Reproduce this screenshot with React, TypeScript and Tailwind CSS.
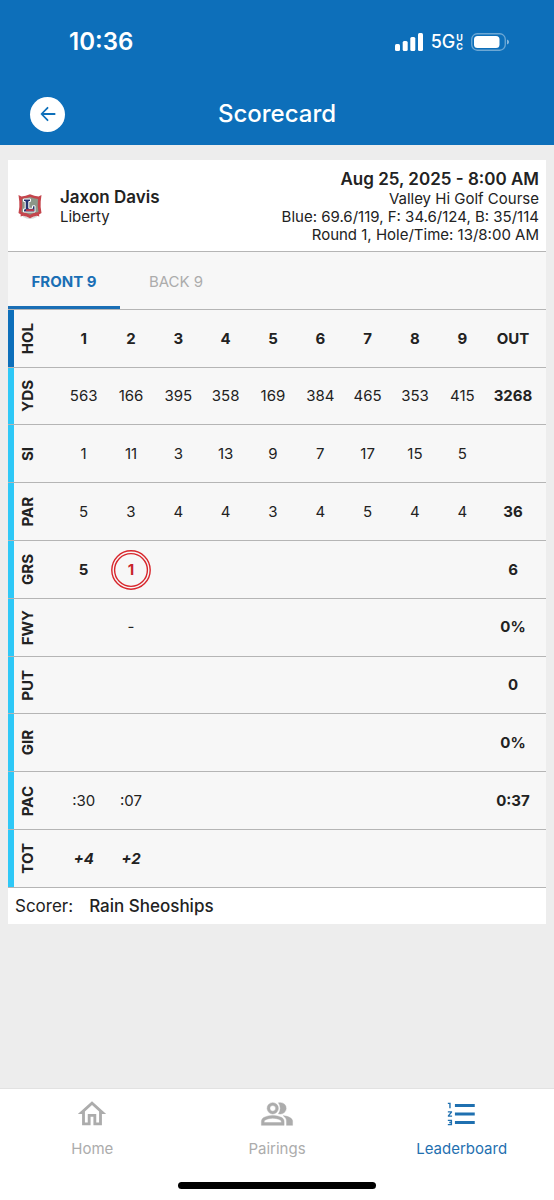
import React from "react";
import clsx from "clsx";
import { MdOutlineHome, MdFormatListNumbered } from "react-icons/md";

interface ScoreRow {
  label: string;
  values: string[];
  total: string;
  style?: string;
}

const holes = ["1", "2", "3", "4", "5", "6", "7", "8", "9"];

const rows: ScoreRow[] = [
  { label: "YDS", values: ["563", "166", "395", "358", "169", "384", "465", "353", "415"], total: "3268" },
  { label: "SI", values: ["1", "11", "3", "13", "9", "7", "17", "15", "5"], total: "" },
  { label: "PAR", values: ["5", "3", "4", "4", "3", "4", "5", "4", "4"], total: "36" },
  { label: "GRS", values: ["5", "1"], total: "6", style: "font-bold" },
  { label: "FWY", values: ["", "-"], total: "0%" },
  { label: "PUT", values: [], total: "0" },
  { label: "GIR", values: [], total: "0%" },
  { label: "PAC", values: [":30", ":07"], total: "0:37" },
  { label: "TOT", values: ["+4", "+2"], total: "", style: "font-bold italic" },
];

function PairingsIcon({ size }: { size: number }) {
  return (
    <svg width={size} height={size} viewBox="0 0 24 24" fill="currentColor" stroke="currentColor" strokeWidth="0.3" aria-hidden="true">
      <path
        fillRule="evenodd"
        d="M9 12a4 4 0 1 1 0-8 4 4 0 0 1 0 8zm0-2a2 2 0 1 0 0-4 2 2 0 0 0 0 4zM1 20v-2.800q0-.85.440-1.560T2.600 14.550q1.550-.78 3.150-1.160T9 13t3.250.390 3.150 1.160q.73.380 1.160 1.090T17 17.200V20zm2-2h12v-.8q0-.28-.14-.5t-.36-.35q-1.350-.68-2.730-1.010T9 15t-2.770.340T3.500 16.350q-.22.130-.36.350T3 17.200z"
      />
      <path d="M13 11.900Q14.300 10.250 14.300 8T13 4.100Q13.500 4 14.500 4a4 4 0 0 1 0 8q-.9 0-1.500-.1zM18.700 20v-3q0-1.100-.61-2.110T16.400 13.150q1.530.15 2.650.51t2.100.89q.9.500 1.380 1.110T23 17v3z" />
    </svg>
  );
}

const navItems = [
  { label: "Home", icon: MdOutlineHome, active: false },
  { label: "Pairings", icon: PairingsIcon, active: false },
  { label: "Leaderboard", icon: MdFormatListNumbered, active: true },
];

function StatusBar() {
  return (
    <div className="flex h-[83px] items-center justify-between pr-11 pl-[69px]">
      <span className="text-[24px] font-semibold">10:36</span>
      <div className="flex items-center gap-2">
        <svg width="28" height="18" viewBox="0 0 28 18" fill="currentColor" aria-hidden="true">
          <rect x="0" y="11" width="5" height="7" rx="1.5" />
          <rect x="7.7" y="8" width="5" height="10" rx="1.5" />
          <rect x="15.3" y="4" width="5" height="14" rx="1.5" />
          <rect x="23" y="0" width="5" height="18" rx="1.5" />
        </svg>
        <div className="flex items-center gap-px">
          <span className="text-[18px] font-medium">5G</span>
          <span className="flex flex-col text-[9px] leading-[9px] font-bold">
            <span>U</span>
            <span>C</span>
          </span>
        </div>
        <svg width="39" height="18" viewBox="0 0 39 18" aria-hidden="true">
          <rect x="0.75" y="0.75" width="33.5" height="16.5" rx="5.5" fill="none" stroke="#fff" strokeOpacity="0.4" strokeWidth="1.3" />
          <rect x="3" y="3" width="25.5" height="12" rx="3.5" fill="#fff" />
          <path d="M36 6.5c1.4.5 2 1.4 2 2.500s-.6 2-2 2.500z" fill="#fff" fillOpacity="0.5" />
        </svg>
      </div>
    </div>
  );
}

function SchoolLogo() {
  return (
    <svg width="24" height="26" viewBox="0 0 24 26" role="img" aria-label="Liberty">
      <path d="M4 20q8 7 16 0l-1 3q-7 4-14 0z" fill="#d9dad8" />
      <path d="M0.500 1l3 1.500q4-.3 8.500-2.200 4.500 1.900 8.500 2.200l3-1.500-.8 6.500q-.5 6 .8 11.500l-2.500 1.500.3 2-2.500-.8q-4 .5-6.800 2.500-2.800-2-6.800-2.500L2.500 22.500l.3-2L.5 19q1.300-5.500.8-11.500z" fill="#c4454c" />
      <path d="M4 5q4-.3 8-2 4 1.700 8 2-.8 7 .5 13-5 .5-8.500 2.700Q8.500 18.500 3.500 18 4.800 12 4 5z" fill="#8c9789" />
      <path d="M5.500 5h7v2.500h-1.700v6.800h3.700v-2.500H17V18H5.500v-3h1.700V7.500H5.500z" fill="#26346f" stroke="#fff" strokeWidth="1" />
      <path d="M8 15.200h8v2H8z" fill="#c23a48" />
    </svg>
  );
}

function PlayerHeader() {
  return (
    <section className="flex items-center justify-between border-b border-[#b5b5b5] bg-white px-[7px] pt-2 pb-[7px]">
      <div className="flex items-center gap-[18px] pt-px pl-[3px]">
        <SchoolLogo />
        <div>
          <h2 className="text-[17px] leading-5 font-semibold">Jaxon Davis</h2>
          <p className="text-[15px] leading-5">Liberty</p>
        </div>
      </div>
      <div className="text-right text-[15px] leading-[18px]">
        <p className="text-[17px] leading-[22px] font-semibold">Aug 25, 2025 - 8:00 AM</p>
        <p>Valley Hi Golf Course</p>
        <p>Blue: 69.6/119, F: 34.6/124, B: 35/114</p>
        <p>Round 1, Hole/Time: 13/8:00 AM</p>
      </div>
    </section>
  );
}

function RowLabel({ children }: { children: React.ReactNode }) {
  return (
    <th scope="row" className="p-0">
      <span className="ml-1 block w-5 rotate-180 text-center leading-5 font-bold [writing-mode:vertical-rl]">
        {children}
      </span>
    </th>
  );
}

// Double ring = eagle or better
function EagleScore({ score }: { score: string }) {
  return (
    <span className="relative mx-auto flex size-10 items-center justify-center text-[#c8232b]">
      <svg viewBox="0 0 40 40" className="absolute inset-0" fill="none" stroke="#d8262c" strokeWidth="1.4" aria-hidden="true">
        <circle cx="20" cy="20" r="19.2" />
        <circle cx="20" cy="20" r="16.4" />
      </svg>
      {score}
    </span>
  );
}

function ScoreTable() {
  return (
    <table className="h-[578px] w-full table-fixed border-collapse text-center text-[15px]">
      <colgroup>
        <col className="w-[6px]" />
        <col className="w-[46px]" />
        {holes.map((hole) => (
          <col key={hole} />
        ))}
        <col className="w-[60px]" />
      </colgroup>
      <thead>
        <tr className="h-[57px] border-b border-[#b5b5b5]">
          <td className="bg-[#0d6fba] p-0" />
          <RowLabel>HOL</RowLabel>
          {holes.map((hole) => (
            <th key={hole} scope="col" className="px-0 pt-px pb-0 font-bold">
              {hole}
            </th>
          ))}
          <th scope="col" className="pt-px pr-[6px] pb-0 pl-0 font-bold">OUT</th>
        </tr>
      </thead>
      <tbody>
        {rows.map((row) => (
          <tr key={row.label} className="h-[57px] border-b border-[#b5b5b5]">
            <td className="bg-[#2ec8f7] p-0" />
            <RowLabel>{row.label}</RowLabel>
            {holes.map((hole, i) => (
              <td key={hole} className={clsx("px-0 pt-px pb-0", row.style)}>
                {row.label === "GRS" && i === 1 ? <EagleScore score={row.values[i]} /> : row.values[i]}
              </td>
            ))}
            <td className="pt-px pr-[6px] pb-0 pl-0 font-bold">{row.total}</td>
          </tr>
        ))}
      </tbody>
    </table>
  );
}

export default function App() {
  return (
    <div className="flex min-h-screen flex-col bg-[#ededed] font-['Inter',sans-serif] text-[#222]">
      <header className="bg-[#0d6fba] text-white">
        <StatusBar />
        <div className="grid h-[62px] grid-cols-[1fr_auto_1fr] items-center px-[30px]">
          <button type="button" aria-label="Back" className="flex size-[35px] items-center justify-center rounded-full bg-white text-[#0d6fba]">
            <svg width="16" height="16" viewBox="0 0 18 18" fill="none" stroke="currentColor" strokeWidth="2" strokeLinecap="round" strokeLinejoin="round">
              <path d="M16.500 9H2M8.500 2L1.700 9l6.800 7" />
            </svg>
          </button>
          <h1 className="text-[24px] font-medium">Scorecard</h1>
        </div>
      </header>

      <main className="flex-1 px-2 pt-[15px]">
        <div className="bg-[#f7f7f7]">
          <PlayerHeader />
          <div role="tablist" className="flex h-[58px] border-b border-[#b5b5b5] text-[15px]">
            <button type="button" role="tab" aria-selected="true" className="w-28 border-b-3 border-[#1a6fb5] pt-1.5 font-bold text-[#1a6fb5]">
              FRONT 9
            </button>
            <button type="button" role="tab" aria-selected="false" className="w-28 border-b-3 border-transparent pt-1.5 text-[#acacac]">
              BACK 9
            </button>
          </div>
          <ScoreTable />
          <p className="flex gap-4 bg-white px-[7px] py-1 text-[17px] leading-7">
            <span>Scorer:</span>
            <span className="font-medium">Rain Sheoships</span>
          </p>
        </div>
      </main>

      <nav className="border-t border-[#e2e2e2] bg-white">
        <div className="grid grid-cols-3 pt-2">
          {navItems.map(({ label, icon: Icon, active }) => (
            <a
              key={label}
              href="#"
              className={clsx("flex flex-col items-center gap-2 text-[15px] leading-5", active ? "text-[#1f70b0]" : "text-[#acacac]")}
            >
              <Icon size={34} />
              {label}
            </a>
          ))}
        </div>
        <div className="mx-auto mt-[23px] mb-[11px] h-[7px] w-[198px] rounded-full bg-black" />
      </nav>
    </div>
  );
}
